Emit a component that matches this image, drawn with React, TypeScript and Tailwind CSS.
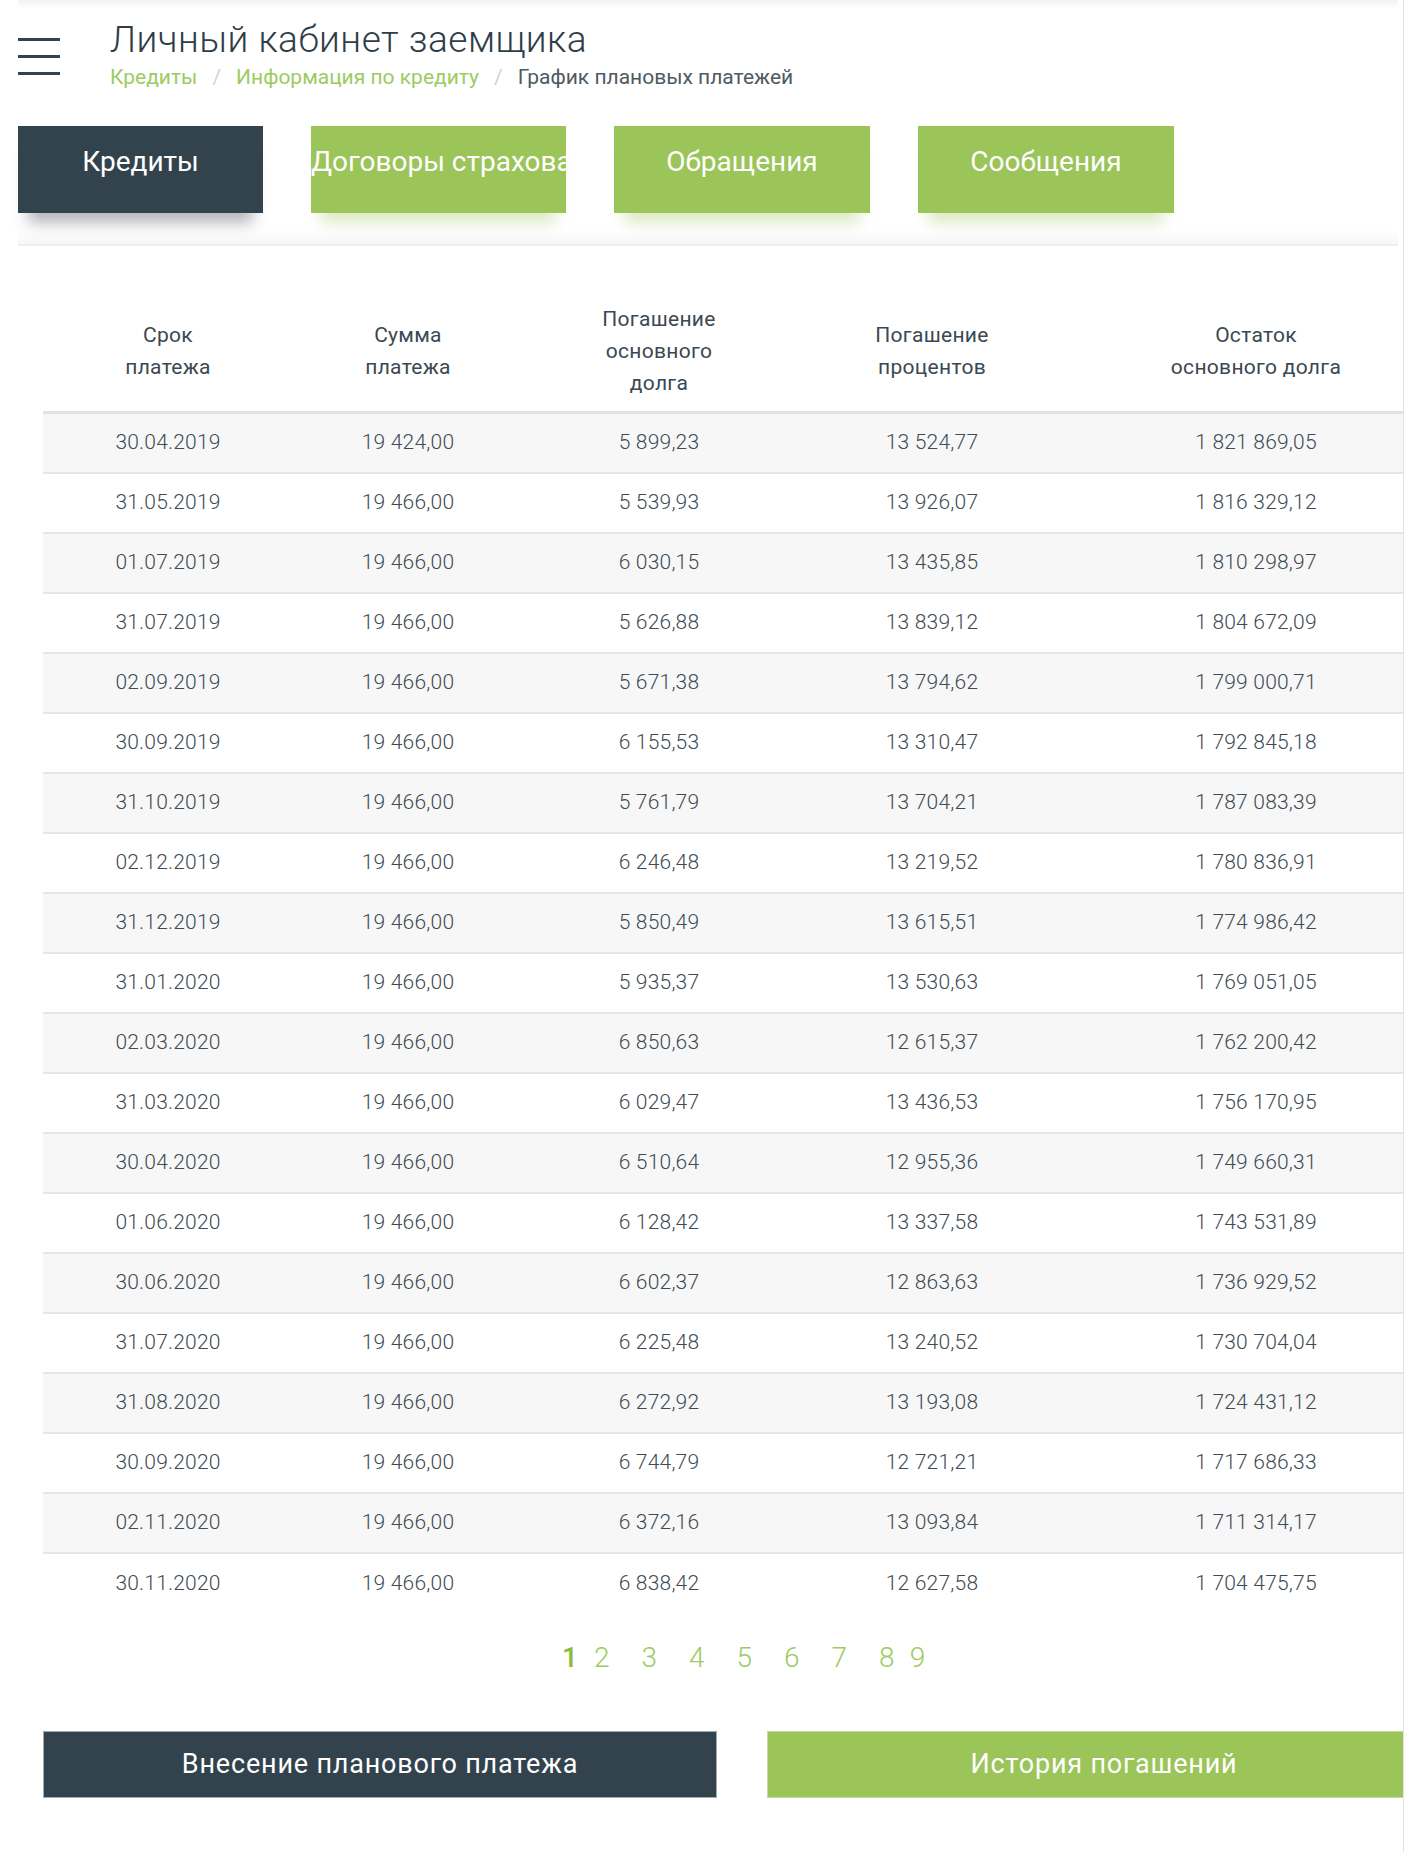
const rows: string[][] = [
  ["30.04.2019", "19 424,00", "5 899,23", "13 524,77", "1 821 869,05"],
  ["31.05.2019", "19 466,00", "5 539,93", "13 926,07", "1 816 329,12"],
  ["01.07.2019", "19 466,00", "6 030,15", "13 435,85", "1 810 298,97"],
  ["31.07.2019", "19 466,00", "5 626,88", "13 839,12", "1 804 672,09"],
  ["02.09.2019", "19 466,00", "5 671,38", "13 794,62", "1 799 000,71"],
  ["30.09.2019", "19 466,00", "6 155,53", "13 310,47", "1 792 845,18"],
  ["31.10.2019", "19 466,00", "5 761,79", "13 704,21", "1 787 083,39"],
  ["02.12.2019", "19 466,00", "6 246,48", "13 219,52", "1 780 836,91"],
  ["31.12.2019", "19 466,00", "5 850,49", "13 615,51", "1 774 986,42"],
  ["31.01.2020", "19 466,00", "5 935,37", "13 530,63", "1 769 051,05"],
  ["02.03.2020", "19 466,00", "6 850,63", "12 615,37", "1 762 200,42"],
  ["31.03.2020", "19 466,00", "6 029,47", "13 436,53", "1 756 170,95"],
  ["30.04.2020", "19 466,00", "6 510,64", "12 955,36", "1 749 660,31"],
  ["01.06.2020", "19 466,00", "6 128,42", "13 337,58", "1 743 531,89"],
  ["30.06.2020", "19 466,00", "6 602,37", "12 863,63", "1 736 929,52"],
  ["31.07.2020", "19 466,00", "6 225,48", "13 240,52", "1 730 704,04"],
  ["31.08.2020", "19 466,00", "6 272,92", "13 193,08", "1 724 431,12"],
  ["30.09.2020", "19 466,00", "6 744,79", "12 721,21", "1 717 686,33"],
  ["02.11.2020", "19 466,00", "6 372,16", "13 093,84", "1 711 314,17"],
  ["30.11.2020", "19 466,00", "6 838,42", "12 627,58", "1 704 475,75"],
];

const tabs = [
  { label: "Кредиты", cls: "w-[245px] bg-[#33434d] shadow-[0_20px_14px_-10px_rgba(40,50,60,0.35)]" },
  { label: "Договоры страхования", cls: "w-[255px] bg-[#9bc459] shadow-[0_20px_14px_-10px_rgba(155,196,89,0.35)]" },
  { label: "Обращения", cls: "w-[256px] bg-[#9bc459] shadow-[0_20px_14px_-10px_rgba(155,196,89,0.35)]" },
  { label: "Сообщения", cls: "w-[256px] bg-[#9bc459] shadow-[0_20px_14px_-10px_rgba(155,196,89,0.35)]" },
];

const pages = [
  { n: "1", cls: "font-medium text-[#8bbb3f]" },
  { n: "2", cls: "ml-[16px]" },
  { n: "3", cls: "ml-[32px]" },
  { n: "4", cls: "ml-[32px]" },
  { n: "5", cls: "ml-[32px]" },
  { n: "6", cls: "ml-[32px]" },
  { n: "7", cls: "ml-[32px]" },
  { n: "8", cls: "ml-[32px]" },
  { n: "9", cls: "ml-[15px]" },
];

const cols = "grid grid-cols-[250px_230px_272px_274px_1fr]";

export default function App() {
  return (
    <div className="w-[1419px] min-h-[1852px] bg-white font-['Roboto',sans-serif]">
      <div className="w-[1404px] min-h-[1852px] overflow-hidden border-r border-[#e2e2e2]">
        {/* top shadow */}
        <div className="ml-[18px] mr-[5px] h-[8px] bg-gradient-to-b from-[#f3f3f3] to-white" />

        {/* header */}
        <div className="flex items-start pl-[18px] pt-[12px]">
          <div className="mt-[18px] flex w-[42px] flex-col gap-[14px]">
            <span className="block h-[3px] w-[42px] bg-[#33434d]" />
            <span className="block h-[3px] w-[42px] bg-[#33434d]" />
            <span className="block h-[3px] w-[42px] bg-[#33434d]" />
          </div>
          <div className="ml-[50px]">
            <h1 className="text-[37px] font-light leading-[40px] tracking-[0.5px] text-[#2f3d47]">
              Личный кабинет заемщика
            </h1>
            <div className="mt-[4px] flex items-center text-[21px] leading-[26px]">
              <span className="text-[#9ccb62]">Кредиты</span>
              <span className="mx-[15px] text-[#cfd4d8]">/</span>
              <span className="text-[#9ccb62]">Информация по кредиту</span>
              <span className="mx-[15px] text-[#cfd4d8]">/</span>
              <span className="text-[#4d5a63]">График плановых платежей</span>
            </div>
          </div>
        </div>

        {/* tabs */}
        <div className="mt-[36px] flex gap-[48px] pl-[18px]">
          {tabs.map((t) => (
            <div
              key={t.label}
              className={`h-[87px] overflow-hidden whitespace-nowrap pt-[19px] text-center text-[28px] leading-[34px] text-white ${t.cls}`}
            >
              {t.label}
            </div>
          ))}
        </div>

        {/* separator */}
        <div className="ml-[18px] mr-[5px] mt-[17px] h-[16px] border-b-2 border-[#eceeef] bg-gradient-to-b from-white to-[#f6f7f7]" />

        {/* table */}
        <div className="ml-[43px] mt-[57px]">
          <div className={`${cols} items-center border-b-[3px] border-[#e3e3e3] pb-[12px] text-center text-[21px] leading-[32px] tracking-[0.3px] text-[#3b4851]`}>
            <div>Срок<br />платежа</div>
            <div>Сумма<br />платежа</div>
            <div>Погашение<br />основного<br />долга</div>
            <div>Погашение<br />процентов</div>
            <div className="pl-[40px]">Остаток<br />основного долга</div>
          </div>
          {rows.map((r, i) => (
            <div
              key={i}
              className={`${cols} h-[60px] items-center text-center text-[21px] font-light tracking-[0.2px] text-[#3e4b54] ${i % 2 === 0 ? "bg-[#f7f7f7]" : "bg-white"} ${i < rows.length - 1 ? "border-b-2 border-[#e6e6e6]" : ""}`}
            >
              <div>{r[0]}</div>
              <div>{r[1]}</div>
              <div>{r[2]}</div>
              <div>{r[3]}</div>
              <div className="pl-[40px]">{r[4]}</div>
            </div>
          ))}
        </div>

        {/* pagination */}
        <div className="mt-[27px] flex pl-[562px] text-[28px] font-light leading-[34px] text-[#9ccb62]">
          {pages.map((p) => (
            <span key={p.n} className={p.cls}>{p.n}</span>
          ))}
        </div>

        {/* actions */}
        <div className="ml-[43px] mt-[56px] flex gap-[50px]">
          <button className="h-[67px] w-[674px] shrink-0 border border-[#9fabb3] bg-[#33434d] text-[27px] tracking-[0.8px] text-white">
            Внесение планового платежа
          </button>
          <button className="h-[67px] w-[674px] shrink-0 border border-[#c3dca0] bg-[#9bc459] text-[27px] tracking-[0.8px] text-white">
            История погашений
          </button>
        </div>
      </div>
    </div>
  );
}
